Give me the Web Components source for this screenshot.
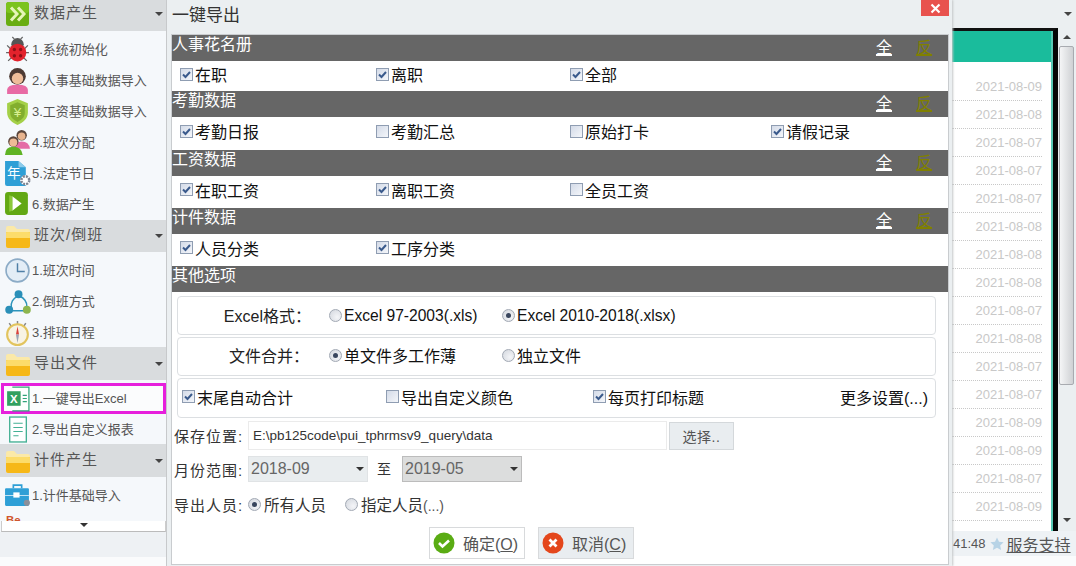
<!DOCTYPE html>
<html>

<head>
  <meta charset="utf-8" />
  <title>一键导出</title>
  <style>
    html, body {
      margin: 0;
      height: 100%;
      overflow: hidden;
    }

    body {
      font-family: "Liberation Sans", "Noto Sans CJK SC", sans-serif;
    }

    #page {
      display: grid;
      grid-template-columns: 167px 785px 124px;
      height: 566px;
    }
  </style>
</head>

<body>
  <div id="page">
    <side-nav>
      <nav-group head="31" lift="3" icon="chev" label="数据产生">
        <nav-item icon="bug">1.系统初始化</nav-item>
        <nav-item icon="person">2.人事基础数据导入</nav-item>
        <nav-item icon="shield">3.工资基础数据导入</nav-item>
        <nav-item icon="pair">4.班次分配</nav-item>
        <nav-item icon="year">5.法定节日</nav-item>
        <nav-item icon="play">6.数据产生</nav-item>
      </nav-group>
      <nav-group head="32" tail="-1" icon="folder" label="班次/倒班">
        <nav-item icon="clock">1.班次时间</nav-item>
        <nav-item icon="share">2.倒班方式</nav-item>
        <nav-item icon="watch">3.排班日程</nav-item>
      </nav-group>
      <nav-group head="33" tail="-1" icon="folder" label="导出文件">
        <nav-item icon="excel" active>1.一键导出Excel</nav-item>
        <nav-item icon="report">2.导出自定义报表</nav-item>
      </nav-group>
      <nav-group head="33" icon="folder" label="计件产生">
        <nav-item icon="toolbox">1.计件基础导入</nav-item>
        <nav-item icon="page"></nav-item>
      </nav-group>
    </side-nav>

    <export-dialog heading="一键导出">
      <section-bar toggles>人事花名册</section-bar>
      <check-row style="height:30px;padding-bottom:4px">
        <opt-check checked>在职</opt-check>
        <opt-check checked>离职</opt-check>
        <opt-check checked>全部</opt-check>
      </check-row>
      <section-bar toggles>考勤数据</section-bar>
      <check-row style="height:33px">
        <opt-check checked>考勤日报</opt-check>
        <opt-check>考勤汇总</opt-check>
        <opt-check>原始打卡</opt-check>
        <opt-check checked>请假记录</opt-check>
      </check-row>
      <section-bar toggles>工资数据</section-bar>
      <check-row>
        <opt-check checked>在职工资</opt-check>
        <opt-check checked>离职工资</opt-check>
        <opt-check>全员工资</opt-check>
      </check-row>
      <section-bar toggles>计件数据</section-bar>
      <check-row>
        <opt-check checked>人员分类</opt-check>
        <opt-check checked>工序分类</opt-check>
      </check-row>
      <section-bar>其他选项</section-bar>

      <opt-box style="grid-template-columns:151px 173px 1fr;margin-top:4px">
        <span style="text-align:right;padding:0 18px 2px 0;white-space:nowrap">Excel格式：</span>
        <opt-radio style="font-size:15.600px">Excel 97-2003(.xls)</opt-radio>
        <opt-radio checked style="font-size:15.600px">Excel 2010-2018(.xlsx)</opt-radio>
      </opt-box>
      <opt-box style="grid-template-columns:151px 173px 1fr;padding-bottom:3px">
        <span style="text-align:right;padding:0 20px 1px 0;white-space:nowrap">文件合并：</span>
        <opt-radio checked>单文件多工作薄</opt-radio>
        <opt-radio>独立文件</opt-radio>
      </opt-box>
      <opt-box style="grid-template-columns:204px 207px 1fr auto;height:40px;padding:0 7px 3px 4px;margin-bottom:3px">
        <opt-check checked>末尾自动合计</opt-check>
        <opt-check>导出自定义颜色</opt-check>
        <opt-check checked>每页打印标题</opt-check>
        <span style="color:#111;white-space:nowrap">更多设置(...)</span>
      </opt-box>

      <field-row label="保存位置:">
        <path-field>E:\pb125code\pui_tphrmsv9_query\data</path-field>
        <span style="display:flex;align-items:center;justify-content:center;box-sizing:border-box;width:65px;height:28px;margin-left:2px;background:#e9edf0;border:1px solid #d4d8db;color:#555;font-size:14px;letter-spacing:.5px">选择..</span>
      </field-row>
      <field-row label="月份范围:" style="margin-top:6px">
        <sel-box>2018-09</sel-box>
        <span style="width:25px;padding:0 0 3px 9px;font-size:14px">至</span>
        <sel-box dim>2019-05</sel-box>
      </field-row>
      <field-row label="导出人员:" style="margin-top:9px;height:26px">
        <opt-radio checked style="width:97px;color:#333;gap:3px;font-size:15.500px">所有人员</opt-radio>
        <opt-radio style="color:#333;gap:3px;font-size:15.500px"><span>指定人员<span style="font-size:14px;color:#555">(...)</span></span></opt-radio>
      </field-row>
      <div style="display:flex;gap:13px;margin:10px 0 0 257px">
        <dlg-button kind="ok">确定(<u>O</u>)</dlg-button>
        <dlg-button kind="cancel">取消(<u>C</u>)</dlg-button>
      </div>
    </export-dialog>

    <date-panel dates="09 08 07 07 07 08 08 08 07 08 07 07 09 09 07 09"></date-panel>
  </div>

  <script>
    const icons = {
      chev: `<rect x="1" y="1" width="23" height="24" rx="3" fill="#69ad12"/><rect x="1" y="1" width="23" height="11" rx="3" fill="#7cc31e"/><path d="M6 6.500l6 6.500-6 6.500M13 6.500l6 6.500-6 6.500" fill="none" stroke="#e6f5b8" stroke-width="3"/>`,
      folder: `<path d="M1 5q0-2 2-2h6l3 3h11q2 0 2 2v15q0 2-2 2H3q-2 0-2-2z" fill="#fbe9a8"/><path d="M1 10q0-1 2-1h20q2 0 2 1v13q0 2-2 2H3q-2 0-2-2z" fill="#f6b818"/><path d="M1 10q0-1 2-1h20q2 0 2 1v5H1z" fill="#fcdc6a"/>`,
      bug: `<path d="M3 9l4 4M23 9l-4 4M2 16h4M24 16h-4M4 24l4-4M22 24l-4-4M10 3L8 1M16 3l2-2" stroke="#666" stroke-width="1.200"/><circle cx="13" cy="8" r="6" fill="#555"/><circle cx="13" cy="16" r="8.500" fill="#e3222c"/><circle cx="10" cy="13" r="1.600" fill="#8d1016"/><circle cx="16" cy="13" r="1.600" fill="#8d1016"/><circle cx="10" cy="19" r="1.600" fill="#8d1016"/><circle cx="16" cy="19" r="1.600" fill="#8d1016"/>`,
      person: `<ellipse cx="13" cy="9" rx="8" ry="8" fill="#4d3a33"/><circle cx="13" cy="11" r="5.500" fill="#efbd9a"/><path d="M3 26v-4q0-5 10-5t10 5v4z" fill="#e86aa4"/>`,
      shield: `<path d="M13 1l10 4v9c0 6-5 10-10 12C8 24 3 20 3 14V5z" fill="#a4d048"/><path d="M13 4l7 3v7c0 5-3 7-7 9-4-2-7-4-7-9V7z" fill="#82ae2e"/><text x="13" y="18" font-size="13" font-family="Liberation Sans" fill="#d8f090" text-anchor="middle">¥</text>`,
      pair: `<circle cx="17" cy="6" r="5" fill="#5b463c"/><circle cx="17" cy="7" r="3.600" fill="#e8b48e"/><path d="M10 19q0-7 7-7t8 7z" fill="#e46ca6"/><circle cx="9" cy="12" r="5" fill="#5b463c"/><circle cx="9" cy="13" r="3.800" fill="#eebb96"/><path d="M1 25q0-8 8-8t9 8z" fill="#5fb324"/>`,
      year: `<path d="M1 1h13l7 6v18H3q-2 0-2-2z" fill="#2e9fd6"/><path d="M14 1l7 6h-7z" fill="#8ccbea"/><text x="9.500" y="17" font-size="13" font-family="Noto Sans CJK SC" fill="#fff" text-anchor="middle">年</text><circle cx="20.500" cy="19.500" r="4.800" fill="#fff"/><circle cx="20.500" cy="19.500" r="3.800" fill="none" stroke="#7f8491" stroke-width="2.400" stroke-dasharray="2 1"/>`,
      play: `<rect x="1" y="1" width="22" height="22" rx="3" fill="#62a814"/><path d="M8 5l9 7-9 7z" fill="#fff"/><path d="M8 5v14l-3 1V4z" fill="#8bc93a"/>`,
      clock: `<circle cx="13" cy="13" r="11" fill="#e3edf6" stroke="#8cabc6" stroke-width="1.600"/><path d="M13 6v8h7" fill="none" stroke="#4f7fa6" stroke-width="1.400"/>`,
      share: `<path d="M7 19A10 10 0 0 1 13 8M15 8a10 10 0 0 1 7 10M8 22h13" fill="none" stroke="#2d94bb" stroke-width="1.400"/><circle cx="14" cy="6" r="3.800" fill="#2a8fb8"/><circle cx="5" cy="21" r="3.800" fill="#2a8fb8"/><circle cx="22" cy="21" r="3.800" fill="#8db54e"/>`,
      watch: `<path d="M13 2v3M5 4l2 3M21 4l-2 3" stroke="#888" stroke-width="1.400"/><circle cx="13" cy="15" r="10" fill="#f8f3e4" stroke="#e2c45e" stroke-width="2"/><path d="M13 7l1.500 8h-3z" fill="#d9403a"/><path d="M13 23l1.500-8h-3z" fill="#9aa4b4"/>`,
      excel: `<path d="M8 2h16v23H8" fill="#fff" stroke="#32a37a" stroke-width="1.200"/><rect x="3" y="6" width="13" height="14" fill="#32a060"/><text x="9.500" y="17.500" font-size="11" font-weight="700" font-family="Liberation Sans" fill="#fff" text-anchor="middle">X</text><path d="M18 10h4M18 13h4M18 16h4" stroke="#32a37a"/>`,
      report: `<rect x="5.500" y="1" width="16" height="24" fill="#fff" stroke="#44b094" stroke-width="1.300"/><path d="M9 7h9M9 11h9M9 15h9M9 19h5" stroke="#44b094"/>`,
      toolbox: `<path d="M9 6V3h8v3" fill="none" stroke="#2e9fd6" stroke-width="1.600"/><rect x="1" y="6" width="23" height="17" rx="1" fill="#2e9fd6"/><path d="M1 13h23" stroke="#bfe2f4"/><rect x="9" y="10" width="6" height="5" fill="#fff"/><circle cx="22" cy="20" r="3" fill="#8a8f9a"/>`,
      page: `<text x="2" y="11" font-size="11" font-weight="700" font-family="Liberation Sans" fill="#d0562e">Be</text>`
    };

    class NavGroup extends HTMLElement {
      constructor() {
        super();
        const height = this.getAttribute('head') || '32';
        this.attachShadow({ mode: 'open' }).innerHTML = `
          <style>
            :host { display: block; }
            .head {
              height: ${height}px;
              box-sizing: border-box;
              display: flex;
              align-items: center;
              gap: 3px;
              padding: 0 0 ${this.getAttribute('lift') || 0}px 5px;
              background: #d9dcde;
              color: #555;
              font-size: 15px;
              letter-spacing: 1px;
            }
            .head span { padding-bottom: 5px; }
            .arrow {
              margin-left: auto;
              margin-right: 3px;
              border: 4px solid transparent;
              border-top: 4px solid #444;
              border-bottom: 0;
            }
            svg { width: 26px; height: 26px; flex: none; }
            .items { padding-top: 3px; margin-bottom: ${this.getAttribute('tail') || 0}px; }
          </style>
          <div class="head">
            <svg viewBox="0 0 26 26">${icons[this.getAttribute('icon')]}</svg>
            <span>${this.getAttribute('label')}</span>
            <i class="arrow"></i>
          </div>
          <div class="items"><slot></slot></div>`;
      }
    }
    customElements.define('nav-group', NavGroup);

    class NavItem extends HTMLElement {
      constructor() {
        super();
        this.attachShadow({ mode: 'open' }).innerHTML = `
          <style>
            :host {
              display: flex;
              align-items: center;
              gap: 1px;
              height: 31px;
              padding-left: 4px;
              color: #555;
              font-size: 13px;
              white-space: nowrap;
            }
            :host([active]) { box-shadow: inset 0 0 0 3px #e61fdc; margin-left: 1px; padding-left: 3px; background: #fbfcfd; }
            svg { width: 27px; height: 27px; flex: none; }
            span { padding-bottom: 3px; }
          </style>
          <svg viewBox="0 0 26 26">${icons[this.getAttribute('icon')]}</svg>
          <span><slot></slot></span>`;
      }
    }
    customElements.define('nav-item', NavItem);

    class SideNav extends HTMLElement {
      constructor() {
        super();
        this.attachShadow({ mode: 'open' }).innerHTML = `
          <style>
            :host {
              display: flex;
              flex-direction: column;
              background: #f5f8fb;
              border-right: 1px solid #c8cacc;
            }
            .list { height: 521px; overflow: hidden; flex: none; }
            .more {
              height: 8px;
              margin: 0 0 0 1px;
              display: flex;
              justify-content: center;
              padding-top: 2px;
              background: #fff;
              border-bottom: 1px solid #bbb;
              border-right: 1px solid #ccc;
              border-left: 1px solid #ccc;
              flex: none;
            }
            .more i { border: 4px solid transparent; border-top: 4px solid #333; border-bottom: 0; height: 0; }
            .rest { height: 25px; background: #eef1f4; flex: none; }
            .foot { flex: 1; background: #fafbfc; }
          </style>
          <div class="list"><slot></slot></div>
          <div class="more"><i></i></div>
          <div class="rest"></div>
          <div class="foot"></div>`;
      }
    }
    customElements.define('side-nav', SideNav);

    class ExportDialog extends HTMLElement {
      constructor() {
        super();
        this.attachShadow({ mode: 'open' }).innerHTML = `
          <style>
            :host {
              display: flex;
              flex-direction: column;
              position: relative;
              padding: 0 3px 1px 4px;
              background: #ebeff1;
              box-shadow: 1px 0 2px #c4c6c8;
            }
            .title {
              height: 34px;
              display: flex;
              align-items: center;
              padding: 0 0 7px 1px;
              box-sizing: border-box;
              font-size: 17px;
              color: #333;
            }
            .close {
              position: absolute;
              top: 0;
              right: 3px;
              width: 28px;
              height: 16px;
              background: #e8524e;
              display: flex;
              align-items: center;
              justify-content: center;
            }
            .card {
              flex: 1;
              display: flex;
              flex-direction: column;
              background: #fff;
              border: 1px solid #c9cccf;
            }
          </style>
          <div class="title">${this.getAttribute('heading')}</div>
          <div class="close"><svg width="11" height="11" viewBox="0 0 11 11"><path d="M1.500 1.500l8 8M9.500 1.500l-8 8" stroke="#fff" stroke-width="2.200"/></svg></div>
          <div class="card"><slot></slot></div>`;
      }
    }
    customElements.define('export-dialog', ExportDialog);

    class SectionBar extends HTMLElement {
      constructor() {
        super();
        const toggles = this.hasAttribute('toggles') ? `<u class="all">全</u><u class="inv">反</u>` : '';
        this.attachShadow({ mode: 'open' }).innerHTML = `
          <style>
            :host {
              display: flex;
              height: 26px;
              background: #666;
              color: #fff;
              font-size: 16px;
              line-height: 20px;
            }
            u { margin-top: 3px; text-underline-offset: 1px; text-decoration-thickness: 2px; height: 23px; }
            .all { margin-left: auto; }
            .inv { margin: 3px 16px 0 24px; color: #808000; }
          </style>
          <span><slot></slot></span>${toggles}`;
      }
    }
    customElements.define('section-bar', SectionBar);

    class CheckRow extends HTMLElement {
      constructor() {
        super();
        this.attachShadow({ mode: 'open' }).innerHTML = `
          <style>
            :host {
              display: grid;
              grid-template-columns: 196px 194px 201px 1fr;
              align-items: center;
              box-sizing: border-box;
              padding: 0 0 5px 8px;
              height: 32px;
            }
          </style>
          <slot></slot>`;
      }
    }
    customElements.define('check-row', CheckRow);

    class OptCheck extends HTMLElement {
      constructor() {
        super();
        const mark = this.hasAttribute('checked')
          ? `<svg width="11" height="11" viewBox="0 0 11 11"><path d="M2 5.500l2.500 2.500 4.500-5" fill="none" stroke="#3a5a8c" stroke-width="2"/></svg>` : '';
        this.attachShadow({ mode: 'open' }).innerHTML = `
          <style>
            :host {
              display: flex;
              align-items: center;
              gap: 2px;
              font-size: 16px;
              color: #111;
              white-space: nowrap;
            }
            .box {
              width: 11px;
              height: 11px;
              flex: none;
              border: 1px solid #8f9db2;
              background: linear-gradient(135deg, #d4dbe8, #f4f6fa);
              display: flex;
            }
          </style>
          <span class="box">${mark}</span><slot></slot>`;
      }
    }
    customElements.define('opt-check', OptCheck);

    class OptRadio extends HTMLElement {
      constructor() {
        super();
        const dot = this.hasAttribute('checked') ? '<i></i>' : '';
        this.attachShadow({ mode: 'open' }).innerHTML = `
          <style>
            :host {
              display: flex;
              align-items: center;
              gap: 2px;
              font-size: 16px;
              color: #111;
              white-space: nowrap;
            }
            .dot {
              width: 11px;
              height: 11px;
              flex: none;
              border: 1px solid #a2a9b4;
              border-radius: 50%;
              background: radial-gradient(circle at 65% 65%, #f4f5f8, #d2d6dd);
              display: flex;
              align-items: center;
              justify-content: center;
            }
            i { width: 5px; height: 5px; border-radius: 50%; background: #39465e; }
          </style>
          <span class="dot">${dot}</span><slot></slot>`;
      }
    }
    customElements.define('opt-radio', OptRadio);

    class OptBox extends HTMLElement {
      constructor() {
        super();
        this.attachShadow({ mode: 'open' }).innerHTML = `
          <style>
            :host {
              display: grid;
              align-items: center;
              margin: 0 12px 2px 5px;
              height: 39px;
              box-sizing: border-box;
              border: 1px solid #dcdfe2;
              border-radius: 4px;
              font-size: 16px;
              color: #222;
            }
          </style>
          <slot></slot>`;
      }
    }
    customElements.define('opt-box', OptBox);

    class FieldRow extends HTMLElement {
      constructor() {
        super();
        this.attachShadow({ mode: 'open' }).innerHTML = `
          <style>
            :host {
              display: flex;
              align-items: center;
              padding-left: 2px;
              color: #333;
              font-size: 16px;
            }
            .label { width: 74px; flex: none; white-space: nowrap; font-size: 15px; letter-spacing: 1px; }
          </style>
          <span class="label">${this.getAttribute('label')}</span><slot></slot>`;
      }
    }
    customElements.define('field-row', FieldRow);

    class SelBox extends HTMLElement {
      constructor() {
        super();
        this.attachShadow({ mode: 'open' }).innerHTML = `
          <style>
            :host {
              display: flex;
              align-items: center;
              box-sizing: border-box;
              width: 120px;
              height: 26px;
              padding: 0 3px 0 2px;
              background: #e9edef;
              border: 1px solid #e0e3e5;
              color: #666;
              font-size: 16px;
            }
            :host([dim]) { background: #dcdddd; border-color: #bcbcbc; }
            i { margin-left: auto; border: 4px solid transparent; border-top: 4px solid #333; border-bottom: 0; }
          </style>
          <slot></slot><i></i>`;
      }
    }
    customElements.define('sel-box', SelBox);

    class DlgButton extends HTMLElement {
      constructor() {
        super();
        const ok = this.getAttribute('kind') === 'ok';
        const glyph = ok
          ? `<circle cx="11" cy="11" r="10.500" fill="#5aac14"/><path d="M6 11l3.500 3.500 6.500-6" fill="none" stroke="#fff" stroke-width="2.600"/>`
          : `<circle cx="11" cy="11" r="10.500" fill="#e4471c"/><path d="M7.500 7.500l7 7M14.500 7.500l-7 7" stroke="#fff" stroke-width="2.800"/>`;
        this.attachShadow({ mode: 'open' }).innerHTML = `
          <style>
            :host {
              display: flex;
              align-items: center;
              gap: 8px;
              box-sizing: border-box;
              width: 96px;
              height: 32px;
              padding-left: 3px;
              border: 1px solid #d8dadc;
              color: #555;
              font-size: 16px;
              white-space: nowrap;
            }
            :host([kind="cancel"]) { background: #e9edf0; }
          </style>
          <svg width="22" height="22" viewBox="0 0 22 22">${glyph}</svg><span><slot></slot></span>`;
      }
    }
    customElements.define('dlg-button', DlgButton);

    class DatePanel extends HTMLElement {
      constructor() {
        super();
        const rows = this.getAttribute('dates').split(' ')
          .map(d => `<div class="row">2021-08-${d}</div>`).join('');
        this.attachShadow({ mode: 'open' }).innerHTML = `
          <style>
            :host {
              display: grid;
              grid-template-rows: 28px 503px 25px 1fr;
              background: #ebeff1;
              overflow: hidden;
            }
            .top { display: flex; justify-content: flex-end; align-items: center; padding-right: 4px; }
            .top i, .down i { border: 4px solid transparent; border-top: 4px solid #444; border-bottom: 0; }
            .middle { display: grid; grid-template-columns: 106px 16px; min-height: 0; }
            .table {
              border-top: 3px solid #111;
              border-right: 5px solid #050505;
              overflow: hidden;
              background: #fff;
            }
            .inner { height: 100%; border-right: 2px solid #58c8b4; }
            .band { height: 31px; background: #1abc9c; margin-bottom: 11px; }
            .row {
              height: 28px;
              margin-right: 9px;
              box-sizing: border-box;
              border-bottom: 1px dotted #c8c8c8;
              text-align: right;
              line-height: 28px;
              font-size: 13px;
              color: #c8c8c8;
            }
            .bar { display: flex; flex-direction: column; min-width: 0; padding-left: 1px; }
            .up { height: 18px; display: flex; align-items: center; justify-content: center; flex: none; }
            .up i { border: 4px solid transparent; border-bottom: 4px solid #444; border-top: 0; }
            .thumb {
              height: 339px;
              flex: none;
              box-sizing: border-box;
              border: 1px solid #a8abb0;
              border-radius: 2px;
              background: linear-gradient(90deg, #f4f5f6, #cfd1d4);
            }
            .down { margin-top: auto; height: 18px; display: flex; align-items: center; justify-content: center; padding-bottom: 2px; }
            .status {
              display: flex;
              align-items: center;
              padding-left: 1px;
              background: #eef2f5;
              font-size: 13px;
              color: #555;
              white-space: nowrap;
            }
            .status svg { margin: 0 3px 0 4px; flex: none; }
            u { font-size: 16px; }
            .foot { background: #fafbfc; }
          </style>
          <div class="top"><i></i></div>
          <div class="middle">
            <div class="table"><div class="inner"><div class="band"></div>${rows}</div></div>
            <div class="bar"><div class="up"><i></i></div><div class="thumb"></div><div class="down"><i></i></div></div>
          </div>
          <div class="status">
            <span>41:48</span>
            <svg width="14" height="14" viewBox="0 0 14 14"><path d="M7 .5l2 4.300 4.600.5-3.400 3.200.9 4.600L7 10.800l-4.100 2.300.9-4.600L.4 5.300 5 4.800z" fill="#b7d3e6"/></svg>
            <u>服务支持</u>
          </div>
          <div class="foot"></div>`;
      }
    }
    customElements.define('date-panel', DatePanel);

    class PathField extends HTMLElement {
      constructor() {
        super();
        this.attachShadow({ mode: 'open' }).innerHTML = `
          <style>
            :host {
              display: flex;
              align-items: center;
              box-sizing: border-box;
              width: 419px;
              height: 29px;
              padding-left: 4px;
              border: 1px solid #ebebeb;
              font-size: 13.500px;
              color: #333;
              white-space: nowrap;
            }
          </style>
          <slot></slot>`;
      }
    }
    customElements.define('path-field', PathField);
  </script>
</body>

</html>
